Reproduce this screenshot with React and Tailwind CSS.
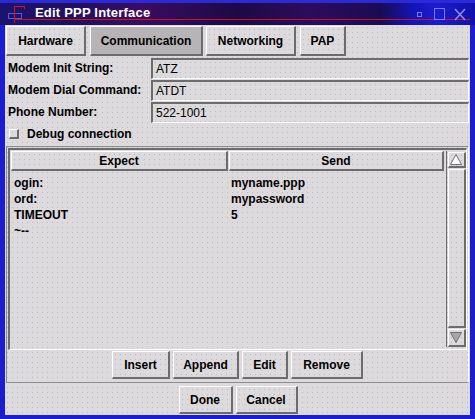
import React from "react";

const font = { fontFamily: '"Liberation Sans", Arial, Helvetica, sans-serif' };

// stippled X11 gray
const STIP = "bg-[#dcdadc] bg-[radial-gradient(#bcbabc_0.6px,transparent_0.9px)] bg-[length:5px_5px]";
const RAISED = "border-t border-l border-r-2 border-b-2 border-t-white border-l-white border-r-[#6c6c6c] border-b-[#6c6c6c]";
const SUNKEN = "border-t-2 border-l-2 border-r border-b border-t-[#6c6c6c] border-l-[#6c6c6c] border-r-white border-b-white";

const Btn = ({ w, h = "h-[28px]", children, dark }) => (
  <div
    className={`${RAISED} ${dark ? "bg-[#b6b4b6]" : STIP} ${w} ${h} flex items-center justify-center text-[12px] font-bold text-black`}
  >
    {children}
  </div>
);

const Field = ({ label, value }) => (
  <div className="flex items-center h-[22px]">
    <div className="w-[146px] pl-[3px] text-[12px] font-bold text-black">{label}</div>
    <div className={`${SUNKEN} ${STIP} w-[318px] h-[21px] flex items-center pl-[3px] text-[12px] text-black`}>
      {value}
    </div>
  </div>
);

const TitleBar = () => (
  <div className="relative h-[25px] border-t-[3px] border-[#2a2ad8] bg-[linear-gradient(90deg,#1a1470_0%,#22105e_15%,#3a0c62_30%,#1c0a46_50%,#2e0c5c_65%,#1a0c52_80%,#1414b8_87%,#1c1cd0_92%,#1010a8_100%)]">
    <svg className="absolute left-[6px] top-[2px]" width="22" height="20" viewBox="0 0 22 20">
      <rect x="2.5" y="8.5" width="13" height="5" fill="none" stroke="#5858d8" />
      <path d="M8.5 1 V18 M8.5 1.5 H18.5 M18.5 1 V4" stroke="#e01010" fill="none" />
    </svg>
    <div className="absolute left-[14px] right-[5px] top-[16px] h-px bg-[#c81818]" />
    <div className="absolute left-[35px] top-[3px] text-[13px] font-bold text-white leading-none tracking-[0.2px]">
      Edit PPP Interface
    </div>
    <svg className="absolute left-[412px] top-[2px]" width="60" height="20" viewBox="0 0 60 20">
      <rect x="5.5" y="7.5" width="4" height="4" fill="none" stroke="#7c7cf0" />
      <rect x="22.5" y="3.5" width="10" height="11" fill="none" stroke="#7c7cf0" />
      <path d="M43 4 L53 15 M53 4 L43 15" stroke="#8c8cf0" strokeWidth="1.6" fill="none" />
    </svg>
  </div>
);

const Row = ({ a, b }) => (
  <div className="flex h-[16px] items-center text-[12px] font-bold text-black">
    <div className="w-[220px] pl-[3px]">{a}</div>
    <div>{b}</div>
  </div>
);

export default function App() {
  return (
    <div style={font} className="w-[475px] h-[419px] bg-[#1c1cd0] flex flex-col overflow-hidden">
      <TitleBar />
      <div className={`${STIP} mx-[5px] h-[390px] flex flex-col`}>
        {/* tabs */}
        <div className="flex pt-[1px] pl-[1px] h-[31px]">
          <Btn w="w-[80px]" h="h-[30px]">Hardware</Btn>
          <div className="w-[4px]" />
          <Btn w="w-[113px]" h="h-[30px]" dark>Communication</Btn>
          <div className="w-[3px]" />
          <Btn w="w-[90px]" h="h-[30px]">Networking</Btn>
          <div className="w-[4px]" />
          <Btn w="w-[46px]" h="h-[30px]">PAP</Btn>
        </div>

        {/* form */}
        <div className="flex flex-col mt-[1px]">
          <Field label="Modem Init String:" value="ATZ" />
          <Field label="Modem Dial Command:" value="ATDT" />
          <Field label="Phone Number:" value="522-1001" />
        </div>
        <div className="flex items-center h-[22px] pl-[4px]">
          <div className={`${RAISED} ${STIP} w-[10px] h-[10px]`} />
          <div className="ml-[8px] text-[12px] font-bold text-black">Debug connection</div>
        </div>

        {/* chat script group */}
        <div className="mt-[1px] ml-[1px] mr-[1px] h-[237px] border border-t-[#8c8c8c] border-l-[#8c8c8c] border-r-white border-b-[#8c8c8c] flex flex-col">
          <div className={`${SUNKEN} h-[202px] ml-[1px] mr-[1px] mt-[1px] flex pt-[1px] pl-[1px]`}>
            <div className="flex flex-col w-[433px]">
              <div className="flex h-[20px]">
                <Btn w="w-[217px]" h="h-[20px]">Expect</Btn>
                <div className="w-[1px]" />
                <Btn w="w-[215px]" h="h-[20px]">Send</Btn>
              </div>
              <div className="pt-[4px] flex flex-col">
                <Row a="ogin:" b="myname.ppp" />
                <Row a="ord:" b="mypassword" />
                <Row a="TIMEOUT" b="5" />
                <Row a="~--" b="" />
              </div>
            </div>
            <div className="ml-[2px] w-[20px] h-[196px] border-l border-[#6c6c6c] flex flex-col items-center pt-[1px]">
              <div className={`${RAISED} ${STIP} w-[18px] h-[16px] flex items-center justify-center`}>
                <svg width="12" height="11" viewBox="0 0 12 11">
                  <path d="M6 0.5 L11.5 10.5 H0.5 Z" fill="#ffffff" stroke="#707070" />
                </svg>
              </div>
              <div className={`${RAISED} ${STIP} w-[18px] flex-1 my-[1px]`} />
              <div className={`${RAISED} ${STIP} w-[18px] h-[18px] flex items-center justify-center`}>
                <svg width="12" height="11" viewBox="0 0 12 11">
                  <path d="M0.5 0.5 H11.5 L6 10.5 Z" fill="#a8a8a8" stroke="#707070" />
                </svg>
              </div>
            </div>
          </div>
          <div className="flex justify-center gap-[3px] mt-[1px]">
            <Btn w="w-[58px]">Insert</Btn>
            <Btn w="w-[66px]">Append</Btn>
            <Btn w="w-[46px]">Edit</Btn>
            <Btn w="w-[72px]">Remove</Btn>
          </div>
        </div>

        <div className="flex justify-center gap-[3px] mt-[3px] pl-[1px]">
          <Btn w="w-[54px]">Done</Btn>
          <Btn w="w-[62px]">Cancel</Btn>
        </div>
      </div>
    </div>
  );
}
